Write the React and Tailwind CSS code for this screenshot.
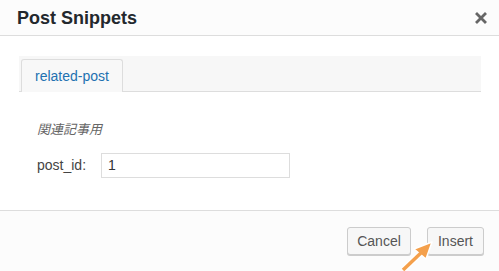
import React from 'react';

function App() {
  return (
    <div className="relative w-[499px] h-[271px] overflow-hidden bg-white font-['Liberation_Sans','Noto_Sans_CJK_JP',sans-serif] text-[#444]">
      <div className="h-[36px] bg-[#fcfcfc] border-b border-[#dddddd] flex items-center justify-between pl-[17px] pr-[12px]">
        <h1 className="text-[18px] font-bold text-[#23282d] leading-none">Post Snippets</h1>
        <button className="text-[#666] w-[12px] h-[12px] flex items-center justify-center">
          <svg width="12" height="12" viewBox="0 0 12 12">
            <path d="M2 2 L10 10 M10 2 L2 10" stroke="#666" strokeWidth="2.8" strokeLinecap="square" />
          </svg>
        </button>
      </div>

      <div className="h-[174px] px-[18px] pt-[20px] pl-[19px]">
        <div className="h-[36px] bg-[#f7f7f7] border-b border-[#dddddd] flex items-end pl-[2px]">
          <div className="h-[33px] px-[13px] bg-[#f8f8f8] border border-b-0 border-[#dddddd] rounded-t-[3px] flex items-center text-[14px] text-[#2271b1] mb-[-1px]">
            related-post
          </div>
        </div>
        <div className="pl-[18px]">
          <p className="mt-[28px] leading-[20px] text-[13px] italic text-[#666]">関連記事用</p>
          <div className="mt-[13px] flex items-center">
            <label className="w-[64px] text-[14px] text-[#444]">post_id:</label>
            <div className="w-[189px] h-[25px] border border-[#dddddd] bg-white flex items-center pl-[6px] text-[14px] text-[#333]">1</div>
          </div>
        </div>
      </div>

      <div className="h-[61px] bg-[#fcfcfc] border-t border-[#dddddd] flex justify-end items-start pt-[16px] pr-[15px] gap-[16px]">
        <button className="w-[64px] h-[28px] rounded-[3px] border border-[#cccccc] bg-[#f7f7f7] shadow-[0_1px_0_#cccccc] text-[14px] text-[#555]">Cancel</button>
        <button className="w-[57px] h-[28px] rounded-[3px] border border-[#cccccc] bg-[#f7f7f7] shadow-[0_1px_0_#cccccc] text-[14px] text-[#555]">Insert</button>
      </div>

      <svg className="absolute left-0 top-0 pointer-events-none" width="499" height="271" viewBox="0 0 499 271">
        <line x1="403" y1="270" x2="424" y2="250" stroke="#ffffff" strokeWidth="6" />
        <path d="M432 242 L414 249 L426 259 Z" fill="#f4a04c" stroke="#ffffff" strokeWidth="1.5" strokeLinejoin="round" />
        <line x1="403" y1="270" x2="423" y2="251" stroke="#f4a04c" strokeWidth="3.5" />
      </svg>
    </div>
  );
}

export default App;
